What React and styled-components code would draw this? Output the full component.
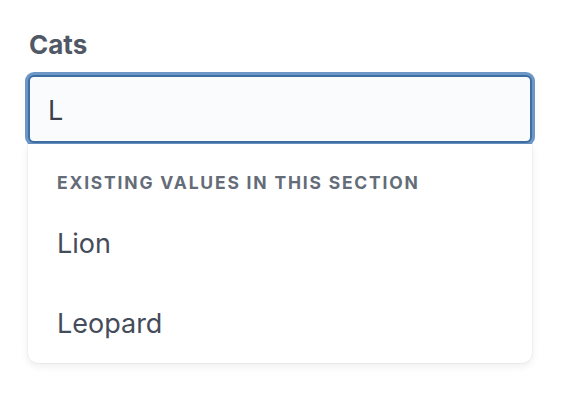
import React from "react";
import styled, { createGlobalStyle } from "styled-components";

const Global = createGlobalStyle`
  html, body { margin: 0; padding: 0; background: #ffffff; }
  body { font-family: Inter, "Noto Sans", sans-serif; -webkit-font-smoothing: antialiased; }
`;

const Page = styled.div`
  padding: 29px 0 40px 25px;
  width: 510px;
`;

const Label = styled.div`
  font-size: 26px;
  font-weight: 700;
  color: #505866;
  line-height: 32px;
  padding-left: 4px;
  margin-bottom: 11px;
`;

const Field = styled.div`
  display: flex;
  flex-direction: column;
`;

const Input = styled.div`
  box-sizing: border-box;
  margin: 3px;
  height: 68px;
  border: 2px solid #3d6fa3;
  border-radius: 6px;
  box-shadow: 0 0 0 3px #6d97c6;
  background: #fafbfd;
  display: flex;
  align-items: center;
  padding-left: 18px;
  padding-top: 2px;
  font-size: 27px;
  color: #3a404b;
`;

const Menu = styled.div`
  position: relative;
  z-index: 1;
  margin: -2px 3px 0 3px;
  background: #ffffff;
  border-radius: 0 0 10px 10px;
  box-shadow: 0 3px 8px rgba(20, 30, 50, 0.08), 0 0 0 1px rgba(20, 30, 50, 0.035);
  padding: 28px 0 0 0;
`;

const Heading = styled.div`
  font-size: 17.5px;
  font-weight: 700;
  color: #646c78;
  letter-spacing: 1.8px;
  text-transform: uppercase;
  padding-left: 29px;
  line-height: 22px;
  margin-bottom: 9px;
`;

const Option = styled.div`
  font-size: 27px;
  color: #454c59;
  padding-left: 29px;
  height: 80px;
  display: flex;
  align-items: center;
  line-height: 1;
`;

export default function App() {
  return (
    <>
      <Global />
      <Page>
        <Label>Cats</Label>
        <Field>
          <Input>L</Input>
          <Menu>
            <Heading>Existing values in this section</Heading>
            <Option>Lion</Option>
            <Option>Leopard</Option>
          </Menu>
        </Field>
      </Page>
    </>
  );
}
